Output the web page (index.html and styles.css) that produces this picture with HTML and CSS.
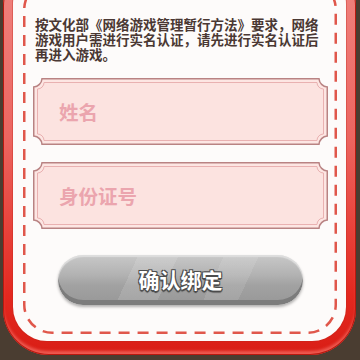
FILE: index.html
```html
<!DOCTYPE html>
<html lang="zh">
<head>
    <meta charset="UTF-8">
    <meta name="viewport" content="width=device-width, initial-scale=1.0">
    <title>实名认证</title>
    <link rel="stylesheet" href="styles.css">
</head>
<body>
    <div class="frame">
        <div class="panel">
            <svg class="stitch" width="314" height="354" viewBox="0 0 314 354">
                <rect x="1.25" y="1.25" width="311.5" height="351.5" rx="28" ry="28"/>
            </svg>

            <p class="notice">按文化部《网络游戏管理暂行方法》要求，网络游戏用户需进行实名认证，请先进行实名认证后再进入游戏。</p>

            <div class="field">
                <svg class="ticket" width="295" height="67" viewBox="0 0 295 67">
                    <path class="outer" d="M9,0.75 H286 A9,9 0 0 0 294.25,9 V58 A9,9 0 0 0 286,66.25 H9 A9,9 0 0 0 0.75,58 V9 A9,9 0 0 0 9,0.75 Z"/>
                    <path class="inner" d="M11,4.5 H284 A6.5,6.5 0 0 0 290.5,11 V56 A6.5,6.5 0 0 0 284,62.5 H11 A6.5,6.5 0 0 0 4.5,56 V11 A6.5,6.5 0 0 0 11,4.5 Z"/>
                </svg>
                <span class="placeholder">姓名</span>
            </div>

            <div class="field">
                <svg class="ticket" width="295" height="67" viewBox="0 0 295 67">
                    <path class="outer" d="M9,0.75 H286 A9,9 0 0 0 294.25,9 V58 A9,9 0 0 0 286,66.25 H9 A9,9 0 0 0 0.75,58 V9 A9,9 0 0 0 9,0.75 Z"/>
                    <path class="inner" d="M11,4.5 H284 A6.5,6.5 0 0 0 290.5,11 V56 A6.5,6.5 0 0 0 284,62.5 H11 A6.5,6.5 0 0 0 4.5,56 V11 A6.5,6.5 0 0 0 11,4.5 Z"/>
                </svg>
                <span class="placeholder">身份证号</span>
            </div>

            <button class="bind-btn">确认绑定</button>
        </div>
    </div>
</body>
</html>
```

FILE: styles.css
```css
body {
    margin: 0;
    width: 360px;
    height: 360px;
    overflow: hidden;
    background-color: #4a3d31;
    font-family: "Noto Sans CJK SC", "Noto Sans", sans-serif;
}

.frame {
    box-sizing: border-box;
    width: 353px;
    height: 395px;
    margin: -40px 0 0 3px;
    padding: 10px 10px 14px 10px;
    border-radius: 46px;
    background: linear-gradient(180deg, #f08682 0%, #ec6560 45%, #e4281f 85%, #d91e16 100%);
    box-shadow: inset 0 0 0 1px #b9180f, inset 0 -4px 3px rgba(255, 140, 130, 0.55);
}

.panel {
    position: relative;
    box-sizing: border-box;
    height: 100%;
    padding: 47px 0 0 20px;
    border-radius: 34px;
    background-color: #fdfbfa;
    box-shadow: 0 0 0 1px rgba(190, 40, 30, 0.35);
}

.stitch {
    position: absolute;
    top: 10px;
    left: 10px;
    pointer-events: none;
}

.stitch rect {
    fill: none;
    stroke: #e0574b;
    stroke-width: 2.5;
    stroke-dasharray: 11 8;
}

.notice {
    width: 290px;
    margin: 0 0 16px 2px;
    font-size: 13.5px;
    line-height: 15px;
    font-weight: bold;
    color: #4a3833;
}

.field {
    position: relative;
    width: 295px;
    height: 67px;
    margin-bottom: 17px;
    display: flex;
    align-items: center;
}

.ticket {
    position: absolute;
    top: 0;
    left: 0;
}

.ticket .outer {
    fill: #fde6e3;
    stroke: #b98383;
    stroke-width: 1.5;
}

.ticket .inner {
    fill: #fce3e0;
    stroke: #e9b1b1;
    stroke-width: 1;
}

.placeholder {
    position: relative;
    margin-left: 26px;
    font-size: 19.5px;
    font-weight: bold;
    color: #eba5ae;
}

.bind-btn {
    display: block;
    width: 245px;
    height: 50px;
    margin: 26px 0 0 25px;
    padding: 0 0 3px;
    border: none;
    border-radius: 25px;
    background:
        linear-gradient(115deg, rgba(255,255,255,0) 30%, rgba(255,255,255,0.12) 30%, rgba(255,255,255,0.12) 45%, rgba(255,255,255,0) 45%, rgba(255,255,255,0) 62%, rgba(255,255,255,0.1) 62%, rgba(255,255,255,0.1) 75%, rgba(255,255,255,0) 75%),
        linear-gradient(180deg, #c8c8c8 0%, #b2b2b2 40%, #a2a2a2 60%, #979797 100%);
    box-shadow: inset 0 -5px 0 #7c7c7c, inset 0 2px 1px #dedede, 0 2px 3px rgba(0, 0, 0, 0.3);
    font-family: "Noto Sans CJK SC", "Noto Sans", sans-serif;
    font-size: 21px;
    font-weight: bold;
    color: #fff;
    text-shadow: 1px 1px 0 #4d4d4d, -1px -1px 0 #4d4d4d, 1px -1px 0 #4d4d4d, -1px 1px 0 #4d4d4d, 0 2px 1px #444;
    cursor: pointer;
}
```
